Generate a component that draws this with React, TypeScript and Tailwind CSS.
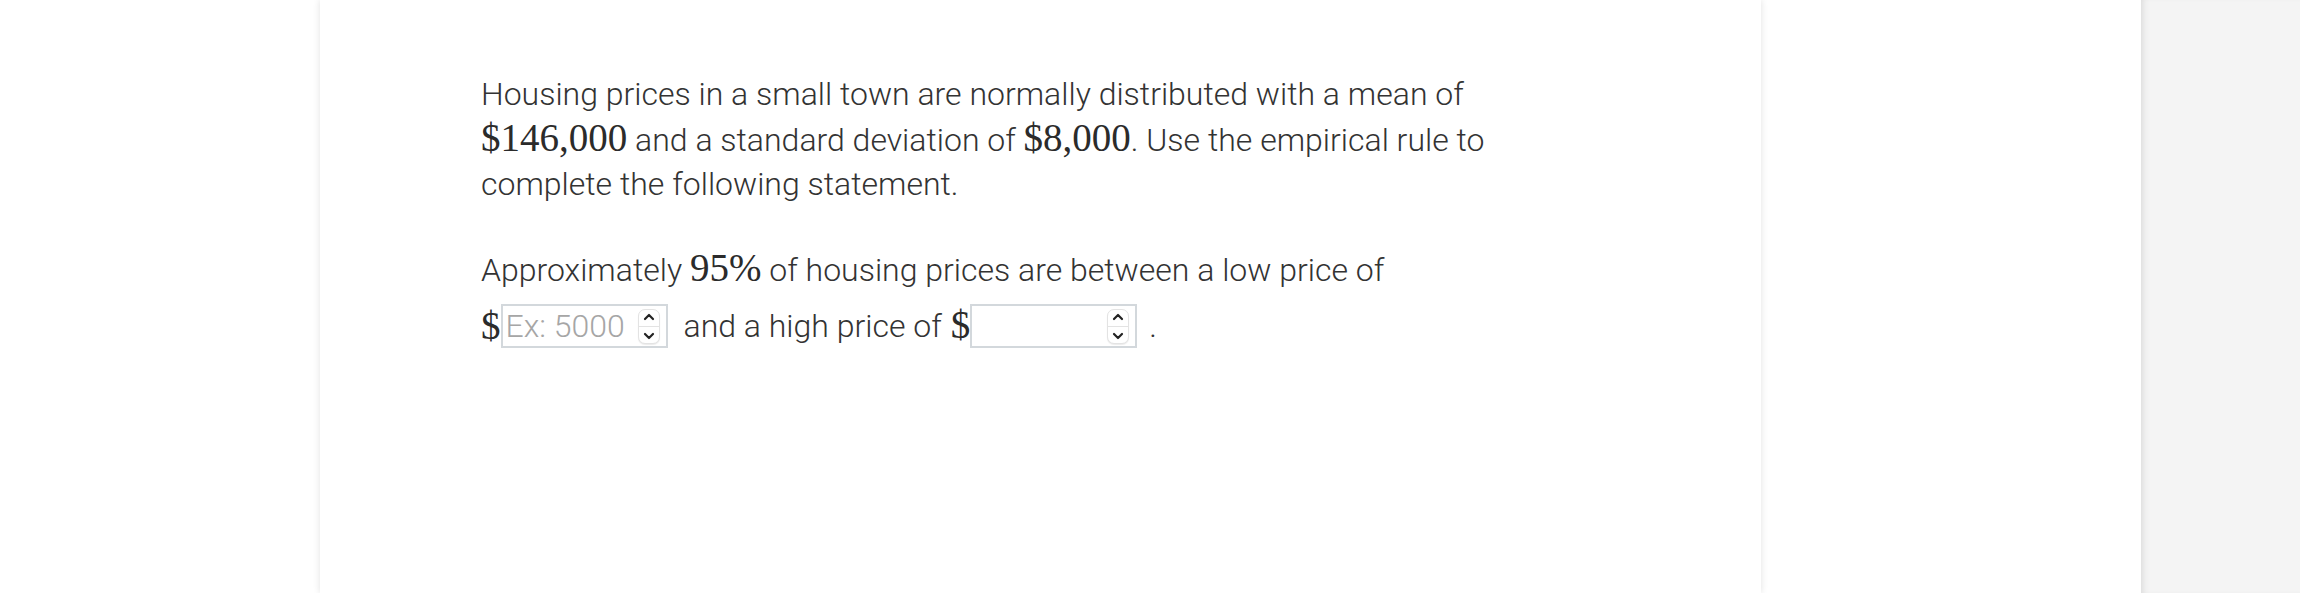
import React from "react";

const M = ({ children }: { children: React.ReactNode }) => (
  <span className="font-['Liberation_Serif',serif] text-[39px] text-[#2b2b2b]">{children}</span>
);

const Spinner = () => (
  <div className="flex h-[35px] w-[22px] flex-col items-center justify-between rounded-[7px] border border-[#e3e3e3] bg-white py-[3px] shadow-[0_1px_1px_rgba(0,0,0,0.08)]">
    <svg width="12" height="8" viewBox="0 0 12 8" fill="none">
      <path d="M2 6 L6 2 L10 6" stroke="#222" strokeWidth="2.2" strokeLinecap="round" strokeLinejoin="round" />
    </svg>
    <div className="h-px w-full bg-[#e3e3e3]" />
    <svg width="12" height="8" viewBox="0 0 12 8" fill="none">
      <path d="M2 2 L6 6 L10 2" stroke="#222" strokeWidth="2.2" strokeLinecap="round" strokeLinejoin="round" />
    </svg>
  </div>
);

const NumInput = ({ placeholder }: { placeholder?: string }) => (
  <span className="inline-flex h-[44px] w-[167px] items-center justify-between border-2 border-[#d3d8dc] bg-white pl-[3px] pr-[6px] align-middle">
    <span className="text-[32px] font-light text-[#a6a6a6]">{placeholder ?? ""}</span>
    <Spinner />
  </span>
);

export default function App() {
  return (
    <div className="flex h-[593px] w-[2300px] bg-white font-['Roboto',sans-serif] text-[#333]">
      <div className="w-[320px] shrink-0" />
      <div className="relative w-[1441px] shrink-0 bg-white pl-[161px] pt-[72px] shadow-[0_0_7px_rgba(0,0,0,0.12)]">
        <div className="w-[1200px] text-[32px] font-light leading-[44px]">
          <p>
            Housing prices in a small town are normally distributed with a mean of
            <br />
            <M>$146,000</M> and a standard deviation of <M>$8,000</M>. Use the empirical rule to
            <br />
            complete the following statement.
          </p>
          <p className="mt-[40px]">
            Approximately <M>95%</M> of housing prices are between a low price of
          </p>
          <p className="mt-[11px] flex items-center leading-[44px]">
            <M>$</M>
            <NumInput placeholder="Ex: 5000" />
            <span className="ml-[16px]">and a high price of</span>
            <span className="ml-[9px]"><M>$</M></span>
            <NumInput />
            <span className="ml-[12px]">.</span>
          </p>
        </div>
      </div>
      <div className="w-[380px] shrink-0" />
      <div className="flex-1 bg-[#f4f4f4] shadow-[inset_6px_0_6px_-4px_rgba(0,0,0,0.1)]" />
    </div>
  );
}
